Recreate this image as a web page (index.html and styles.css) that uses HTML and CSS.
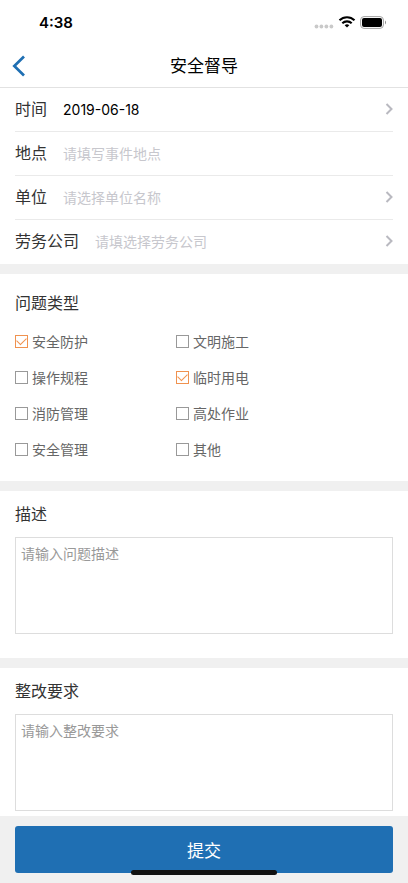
FILE: index.html
```html
<!DOCTYPE html>
<html lang="zh-CN">
<head>
<meta charset="utf-8">
<meta name="viewport" content="width=device-width, initial-scale=1">
<title>安全督导</title>
<link rel="stylesheet" href="styles.css">
</head>
<body>
<header class="top">
  <div class="status">
    <span class="clock">4:38</span>
    <span class="indicators">
      <svg width="20" height="5" viewBox="0 0 20 5" fill="#c9c9c9" aria-hidden="true"><circle cx="2.5" cy="2.5" r="1.9"/><circle cx="7.4" cy="2.5" r="1.9"/><circle cx="12.4" cy="2.5" r="1.9"/><circle cx="17.4" cy="2.5" r="1.9"/></svg>
      <svg width="18" height="12" viewBox="0 0 18 12" fill="none" stroke="#000" stroke-width="2.1" aria-hidden="true"><path d="M1.5 4.3C5.7.2 12.3.2 16.5 4.3"/><path d="M4.3 7.2C6.9 4.7 11.1 4.7 13.7 7.2"/><path d="M6.7 9.2C8 8 10 8 11.3 9.2L9 11.6Z" fill="#000" stroke="none"/></svg>
      <svg width="27" height="13" viewBox="0 0 27 13" aria-hidden="true"><rect x=".6" y=".6" width="22.8" height="11.8" rx="3.4" fill="none" stroke="#a3a3a3"/><rect x="2" y="2" width="20" height="9" rx="2" fill="#000"/><path d="M25 4.6C26.3 5.2 26.3 7.8 25 8.4Z" fill="#888"/></svg>
    </span>
  </div>
  <nav class="bar">
    <button class="back" type="button" aria-label="返回"><svg width="14" height="22" viewBox="0 0 14 22" fill="none" stroke="#1f6fb3" stroke-width="2.7" aria-hidden="true"><path d="M12 1.5L2.3 11L12 20.5"/></svg></button>
    <h1 class="title">安全督导</h1>
  </nav>
</header>
<form class="form">
  <section class="fields">
    <div class="row">
      <label class="label" for="date">时间</label>
      <input class="input" id="date" type="text" value="2019-06-18">
      <button class="more" type="button" aria-label="选择时间"><svg width="8" height="12" viewBox="0 0 8 12" aria-hidden="true"><path d="M1.5 1L6.5 6L1.5 11"/></svg></button>
    </div>
    <div class="row">
      <label class="label" for="place">地点</label>
      <input class="input" id="place" type="text" placeholder="请填写事件地点">
    </div>
    <div class="row">
      <label class="label" for="unit">单位</label>
      <input class="input" id="unit" type="text" placeholder="请选择单位名称">
      <button class="more" type="button" aria-label="选择单位"><svg width="8" height="12" viewBox="0 0 8 12" aria-hidden="true"><path d="M1.5 1L6.5 6L1.5 11"/></svg></button>
    </div>
    <div class="row">
      <label class="label" for="company">劳务公司</label>
      <input class="input" id="company" type="text" placeholder="请填选择劳务公司">
      <button class="more" type="button" aria-label="选择劳务公司"><svg width="8" height="12" viewBox="0 0 8 12" aria-hidden="true"><path d="M1.5 1L6.5 6L1.5 11"/></svg></button>
    </div>
  </section>
  <section class="panel">
    <h2 class="heading">问题类型</h2>
    <div class="options">
      <label class="option"><input class="check" type="checkbox" checked>安全防护</label>
      <label class="option"><input class="check" type="checkbox">文明施工</label>
      <label class="option"><input class="check" type="checkbox">操作规程</label>
      <label class="option"><input class="check" type="checkbox" checked>临时用电</label>
      <label class="option"><input class="check" type="checkbox">消防管理</label>
      <label class="option"><input class="check" type="checkbox">高处作业</label>
      <label class="option"><input class="check" type="checkbox">安全管理</label>
      <label class="option"><input class="check" type="checkbox">其他</label>
    </div>
  </section>
  <section class="panel panel-text">
    <label class="heading" for="desc">描述</label>
    <textarea class="area" id="desc" placeholder="请输入问题描述"></textarea>
  </section>
  <section class="panel panel-last">
    <label class="heading" for="demand">整改要求</label>
    <textarea class="area" id="demand" placeholder="请输入整改要求"></textarea>
  </section>
  <footer class="footer">
    <button class="submit" type="submit">提交</button>
    <span class="home"></span>
  </footer>
</form>
</body>
</html>
```
FILE: styles.css
```css
* {
  box-sizing: border-box;
}

body {
  margin: 0;
  min-height: 100vh;
  background: #f0f0f0;
  color: #333;
  font-family: Inter, "Noto Sans CJK SC", sans-serif;
  font-size: 14px;
}

button,
input,
textarea {
  margin: 0;
  padding: 0;
  border: 0;
  background: none;
  font: inherit;
  color: inherit;
}

svg {
  display: block;
}

.top {
  background: #fff;
  border-bottom: 1px solid #e2e2e2;
}

.status {
  display: flex;
  align-items: center;
  justify-content: space-between;
  height: 44px;
  padding: 0 21px 0 39px;
}

.clock {
  color: #000;
  font-size: 15px;
  font-weight: 600;
}

.indicators {
  display: flex;
  align-items: center;
  gap: 4px;
}

.indicators svg:first-child {
  align-self: flex-end;
}

.bar {
  display: grid;
  grid-template-columns: 40px 1fr 40px;
  align-items: center;
  height: 43px;
}

.back {
  padding-left: 12px;
}

.title {
  margin: 0;
  color: #000;
  font-size: 17px;
  font-weight: 400;
  line-height: 24px;
  text-align: center;
}

.fields {
  padding: 0 15px;
  background: #fff;
}

.row {
  display: flex;
  align-items: center;
  height: 44px;
  padding-bottom: 1px;
  border-bottom: 1px solid #eaeaea;
}

.row:last-child {
  border-bottom-color: transparent;
}

.label {
  margin-right: 16px;
  font-size: 16px;
  line-height: 24px;
}

.input {
  flex: 1;
  min-width: 0;
  height: 40px;
  color: #000;
}

.input::placeholder {
  color: #c7c7cd;
}

.more {
  padding: 8px 0;
}

.more path {
  fill: none;
  stroke: #b9b9c0;
  stroke-width: 2;
}

.panel {
  margin-top: 10px;
  padding: 17px 15px 14px;
  background: #fff;
}

.heading {
  display: block;
  margin: 0;
  font-size: 16px;
  font-weight: 400;
  line-height: 24px;
}

.options {
  display: grid;
  grid-template-columns: 161px 1fr;
  grid-auto-rows: 36px;
  margin-top: 8px;
}

.option {
  display: flex;
  align-items: center;
  gap: 4px;
  color: #666;
}

.check {
  appearance: none;
  display: grid;
  place-items: center;
  width: 13px;
  height: 13px;
  border: 1px solid #999;
}

.check:checked {
  border-color: #f0924f;
}

.check:checked::before {
  content: "";
  width: 8px;
  height: 5px;
  margin-bottom: 3px;
  border: solid #f0924f;
  border-width: 0 0 1px 1px;
  transform: rotate(-45deg);
}

.panel-text {
  padding: 11px 15px 24px;
}

.panel-last {
  padding: 11px 15px 5px;
}

.area {
  display: block;
  width: 100%;
  height: 97px;
  margin-top: 11px;
  padding: 6px 5px;
  border: 1px solid #ddd;
  line-height: 20px;
  resize: none;
}

.area::placeholder {
  color: #999;
}

.footer {
  position: sticky;
  bottom: 0;
  padding: 10px 15px;
  background: #f0f0f0;
}

.submit {
  display: block;
  width: 100%;
  height: 47px;
  border-radius: 3px;
  background: #1f6fb3;
  color: #fff;
  font-size: 17px;
}

.home {
  position: absolute;
  bottom: 8px;
  left: 50%;
  width: 146px;
  height: 5px;
  margin-left: -73px;
  border-radius: 3px;
  background: #111;
}
```
